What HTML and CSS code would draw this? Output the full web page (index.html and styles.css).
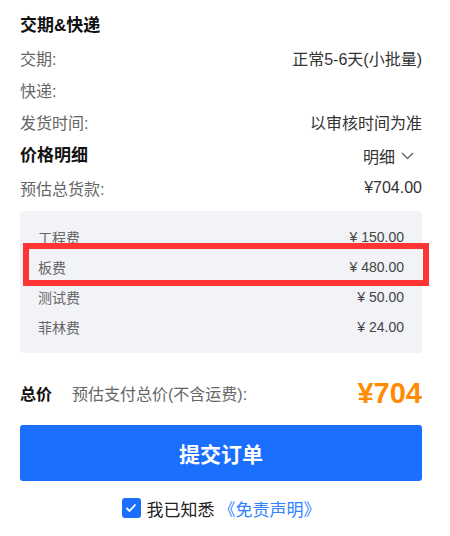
FILE: index.html
```html
<!DOCTYPE html>
<html>
<head>
	<meta charset="utf-8">
	<title>订单确认</title>
	<link rel="stylesheet" href="styles.css">
</head>
<body>
	<div class="main">
		<div class="title">交期&amp;快递</div>
		<div class="row">
			<span class="label">交期:</span>
			<span class="value">正常5-6天(小批量)</span>
		</div>
		<div class="row">
			<span class="label">快递:</span>
			<span class="value"></span>
		</div>
		<div class="row">
			<span class="label">发货时间:</span>
			<span class="value">以审核时间为准</span>
		</div>

		<div class="row price-head">
			<span class="title">价格明细</span>
			<span class="toggle">明细
				<svg width="13" height="8" viewBox="0 0 13 8"><path d="M1 1l5.5 5.5L12 1" fill="none" stroke="#555" stroke-width="1.2"/></svg>
			</span>
		</div>
		<div class="row">
			<span class="label">预估总货款:</span>
			<span class="value">¥704.00</span>
		</div>

		<div class="fees">
			<div class="fee"><span>工程费</span><span>¥ 150.00</span></div>
			<div class="fee"><span>板费</span><span>¥ 480.00</span></div>
			<div class="fee"><span>测试费</span><span>¥ 50.00</span></div>
			<div class="fee"><span>菲林费</span><span>¥ 24.00</span></div>
			<div class="mark"></div>
		</div>

		<div class="total">
			<span class="total-name">总价</span>
			<span class="total-desc">预估支付总价(不含运费):</span>
			<span class="total-sum">¥704</span>
		</div>

		<button class="submit">提交订单</button>

		<div class="agree">
			<span class="check">
				<svg width="12" height="10" viewBox="0 0 12 10"><path d="M1.5 5l3 3 6-6.5" fill="none" stroke="#fff" stroke-width="1.8"/></svg>
			</span>
			<span>我已知悉</span>
			<a class="link">《免责声明》</a>
		</div>
	</div>
</body>
</html>
```

FILE: styles.css
```css
body{
	margin: 0;
	padding: 0;
	background: #fff;
	font-family: "Liberation Sans", "Noto Sans CJK SC", sans-serif;
}
.main{
	width: 402px;
	margin-left: 20px;
	padding-top: 10px;
}
.title{
	height: 32px;
	line-height: 32px;
	font-size: 17px;
	font-weight: bold;
	color: #111;
}
.row{
	display: flex;
	justify-content: space-between;
	align-items: center;
	height: 32px;
	font-size: 16px;
}
.label{
	color: #666;
}
.value{
	color: #333;
}
.price-head{
	margin-top: 2px;
}
.toggle{
	display: flex;
	align-items: center;
	gap: 6px;
	color: #333;
	padding-right: 8px;
}
.fees{
	position: relative;
	margin-top: 7px;
	padding: 11px 18px;
	background: #f2f3f7;
	border-radius: 4px;
}
.fee{
	display: flex;
	justify-content: space-between;
	align-items: center;
	height: 30px;
	font-size: 14px;
	color: #666;
}
.fee span:last-child{
	color: #444;
}
.mark{
	position: absolute;
	top: 32px;
	left: 3px;
	width: 406px;
	height: 43px;
	box-sizing: border-box;
	border: 6px solid #ff3535;
}
.total{
	display: flex;
	align-items: center;
	height: 40px;
	margin-top: 20px;
	font-size: 16px;
}
.total-name{
	font-weight: bold;
	color: #111;
	width: 52px;
}
.total-desc{
	color: #666;
	flex: 1;
}
.total-sum{
	font-size: 29px;
	font-weight: bold;
	color: #ff8c00;
}
.submit{
	display: block;
	width: 100%;
	height: 56px;
	margin-top: 12px;
	border: none;
	border-radius: 3px;
	background: #1a6fff;
	color: #fff;
	font-family: inherit;
	font-size: 21px;
	font-weight: bold;
	cursor: pointer;
}
.agree{
	display: flex;
	justify-content: center;
	align-items: center;
	gap: 6px;
	height: 20px;
	margin-top: 17px;
	font-size: 17px;
	color: #222;
}
.check{
	display: flex;
	justify-content: center;
	align-items: center;
	width: 19px;
	height: 20px;
	border-radius: 3px;
	background: #1a6fff;
}
.link{
	color: #3182ff;
	margin-left: -2px;
}
```
